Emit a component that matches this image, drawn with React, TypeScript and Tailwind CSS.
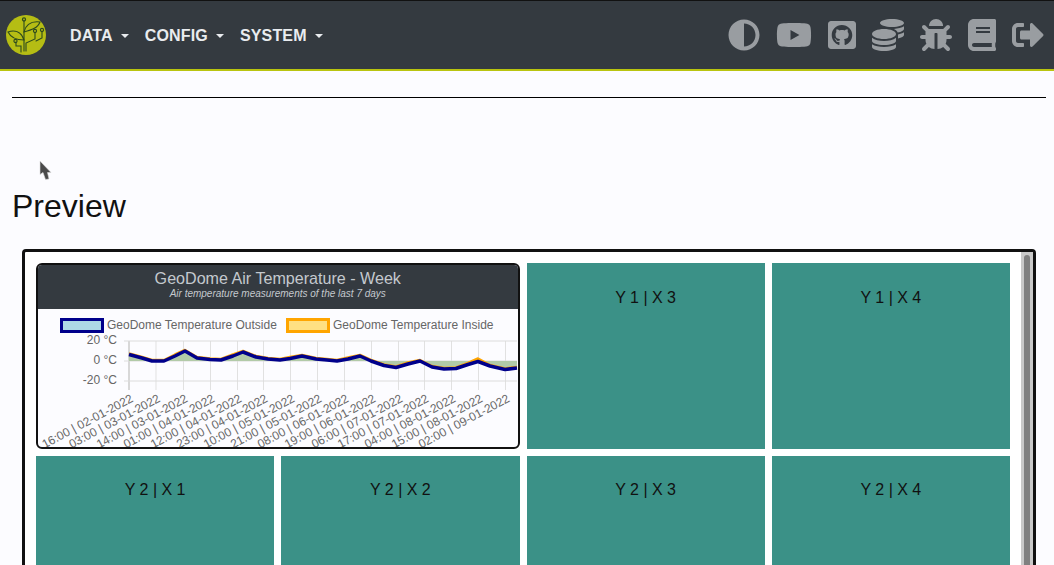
import { FaAdjust, FaYoutube, FaGithubSquare, FaCoins, FaBug, FaBook, FaSignOutAlt } from "react-icons/fa";

const menu = ["DATA", "CONFIG", "SYSTEM"];
const tilesTop = ["Y 1 | X 3", "Y 1 | X 4"];
const tilesBottom = ["Y 2 | X 1", "Y 2 | X 2", "Y 2 | X 3", "Y 2 | X 4"];

const ticks = [
  "16:00 | 02-01-2022", "03:00 | 03-01-2022", "14:00 | 03-01-2022", "01:00 | 04-01-2022",
  "12:00 | 04-01-2022", "23:00 | 04-01-2022", "10:00 | 05-01-2022", "21:00 | 05-01-2022",
  "08:00 | 06-01-2022", "19:00 | 06-01-2022", "06:00 | 07-01-2022", "17:00 | 07-01-2022",
  "04:00 | 08-01-2022", "15:00 | 08-01-2022", "02:00 | 09-01-2022",
];
const tickX = [91, 118, 145.5, 172.5, 199.5, 225.5, 252.5, 279.5, 306.5, 333.5, 360.5, 386.5, 413.5, 440.5, 467.5];

// chart coordinates, origin at top left of the card body
const outside: [number, number][] = [
  [91, 45.5], [104, 49], [114, 52], [126, 52], [137, 47], [147, 42], [159, 49], [172, 50.5], [183, 51],
  [195, 47], [205, 43], [218, 48], [230, 50], [242, 51], [252, 49.5], [264, 47], [278, 50], [289, 51],
  [299, 52], [310, 50], [322, 47], [333, 52], [346, 56.5], [358, 58.5], [370, 55], [382, 52], [394, 58],
  [406, 60], [418, 59.5], [430, 55.5], [440, 52.5], [452, 57], [467, 60.5], [479, 59],
];
const inside: [number, number][] = outside.map(([x, y], i) => [x, y - (i === 30 ? 3 : i % 5 === 4 ? 1.5 : 1)]);

const pts = (p: [number, number][]) => p.map(([x, y]) => `${x},${y}`).join(" ");

function Logo() {
  return (
    <svg width="40" height="40" viewBox="0 0 40 40" fill="none" stroke="#2c4a1e" strokeWidth="1.1" strokeLinecap="round">
      <circle cx="20" cy="20" r="20" fill="#b5bd14" stroke="none" />
      <path d="M18 36V5" />
      <circle cx="18" cy="4.5" r="1.6" />
      <path d="M18 17C20 9 26 6 34 7C32 13 25 15 18 17Z" />
      <path d="M18 25C15 16 8 15 2 17C5 23 12 25 18 25Z" />
      <path d="M20 36V28L29 24V17" />
      <circle cx="29" cy="16" r="1.6" />
      <path d="M30 26L36 23V16" />
      <circle cx="36" cy="15" r="1.6" />
      <path d="M15 37V31H10V27" />
      <circle cx="9.500" cy="26" r="1.6" />
    </svg>
  );
}

function Chart() {
  return (
    <svg width="480" height="138" viewBox="0 0 480 138" className="block" style={{ fontFamily: "'Liberation Sans', Arial, sans-serif" }}>
      <rect x="23.500" y="10.500" width="41" height="12" fill="#add8e6" stroke="#00008b" strokeWidth="3" />
      <text x="69" y="19.500" fontSize="12" fill="#666">GeoDome Temperature Outside</text>
      <rect x="249.500" y="10.500" width="41" height="12" fill="#ffe082" stroke="#ffa500" strokeWidth="3" />
      <text x="295" y="19.500" fontSize="12" fill="#666">GeoDome Temperature Inside</text>

      {tickX.map((x) => (
        <line key={x} x1={x} x2={x} y1="32" y2="81" stroke={x === 91 ? "#d8d8d8" : "#e1e1e1"} strokeWidth={x === 91 ? 2 : 1} />
      ))}
      {[32, 52, 72].map((y) => (
        <line key={y} x1="86" x2="479" y1={y} y2={y} stroke="#dcdcdc" />
      ))}
      <text x="79" y="35" fontSize="12" fill="#666" textAnchor="end">20 °C</text>
      <text x="79" y="55" fontSize="12" fill="#666" textAnchor="end">0 °C</text>
      <text x="79" y="75" fontSize="12" fill="#666" textAnchor="end">-20 °C</text>

      <polygon points={`91,52 ${pts(outside)} 479,52`} fill="#b2caa8" />
      <polyline points={pts(inside)} fill="none" stroke="#ffa500" strokeWidth="2.500" strokeLinejoin="round" />
      <polyline points={pts(outside)} fill="none" stroke="#00008b" strokeWidth="3.500" strokeLinejoin="round" />

      {ticks.map((t, i) => (
        <text key={t} fontSize="12" fill="#666" textAnchor="end" transform={`translate(${tickX[i] + 5} 92) rotate(-28)`}>
          {t}
        </text>
      ))}
    </svg>
  );
}

function Tile({ label, top }: { label: string; top: string }) {
  return (
    <div className={`h-[186px] bg-[#3b9187] text-center text-[16px] leading-[24px] text-[#111] ${top}`}>
      {label}
    </div>
  );
}

export default function App() {
  return (
    <div className="h-[565px] overflow-hidden bg-[#fcfcff] font-['Liberation_Sans',Arial,sans-serif] relative">
      {/* Navbar */}
      <nav className="h-[71px] flex items-center justify-between bg-[#343a40] border-t border-t-[#111] border-b-2 border-b-[#b9c40f] pl-[6px] pr-[10px]">
        <div className="flex items-center">
          <Logo />
          <div className="flex items-center gap-4 ml-6 mt-[2px] tracking-[0.01em]">
            {menu.map((m) => (
              <button key={m} className="flex items-center text-[16px] font-bold text-[#e9ecef]">
                {m}
                <span className="ml-2 w-0 h-0 border-x-4 border-x-transparent border-t-4 border-t-[#e9ecef]" />
              </button>
            ))}
          </div>
        </div>
        <div className="flex items-center gap-4 text-[#999da1]">
          <FaAdjust className="w-8 h-8" />
          <FaYoutube className="w-[36px] h-8" />
          <FaGithubSquare className="w-7 h-8" />
          <FaCoins className="w-8 h-8" />
          <FaBug className="w-8 h-8" />
          <FaBook className="w-7 h-8" />
          <FaSignOutAlt className="w-8 h-8" />
        </div>
      </nav>

      {/* Page */}
      <main className="px-3">
        <hr className="mt-[26px] mr-[-4px] border-t border-black" />
        <h2 className="mt-[89px] text-[32px] leading-[38px] text-[#111]">Preview</h2>

        <div className="mt-[24px] ml-[10px] mr-[6px] flex bg-white border-[3px] border-[#111] rounded-[4px]">
          <div className="flex-1 pl-[11px] pr-[11px] pt-[11px] grid grid-cols-4 gap-[7px] content-start">
            <div className="col-span-2 h-[186px] border-2 border-[#111] rounded-[6px] overflow-hidden flex flex-col bg-[#fcfcff]">
              <div className="h-[44px] bg-[#343a40] text-center shrink-0 pt-[3px]">
                <div className="text-[16.1px] leading-[20px] text-[#c4c9ce]">GeoDome Air Temperature - Week</div>
                <div className="text-[10px] leading-[12px] italic text-[#c4c9ce]">Air temperature measurements of the last 7 days</div>
              </div>
              <Chart />
            </div>
            {tilesTop.map((t) => (
              <Tile key={t} label={t} top="pt-[23px]" />
            ))}
            {tilesBottom.map((t) => (
              <Tile key={t} label={t} top="pt-[22px]" />
            ))}
          </div>
          {/* Scrollbar */}
          <div className="w-[12px] bg-[#c9c9c9] flex justify-center pt-[3px] shrink-0">
            <div className="w-[6px] h-[400px] bg-[#808080] rounded-t-[3px]" />
          </div>
        </div>
      </main>

      {/* Mouse pointer caught in the shot */}
      <svg width="14" height="22" viewBox="0 0 14 22" className="absolute left-[39px] top-[160px]">
        <path d="M1 1V14.500L4 12.500L6.500 19.500L10 19L8.500 12.500H12Z" fill="#4a4a4a" stroke="#dcdcdc" strokeWidth="0.6" />
      </svg>
    </div>
  );
}
